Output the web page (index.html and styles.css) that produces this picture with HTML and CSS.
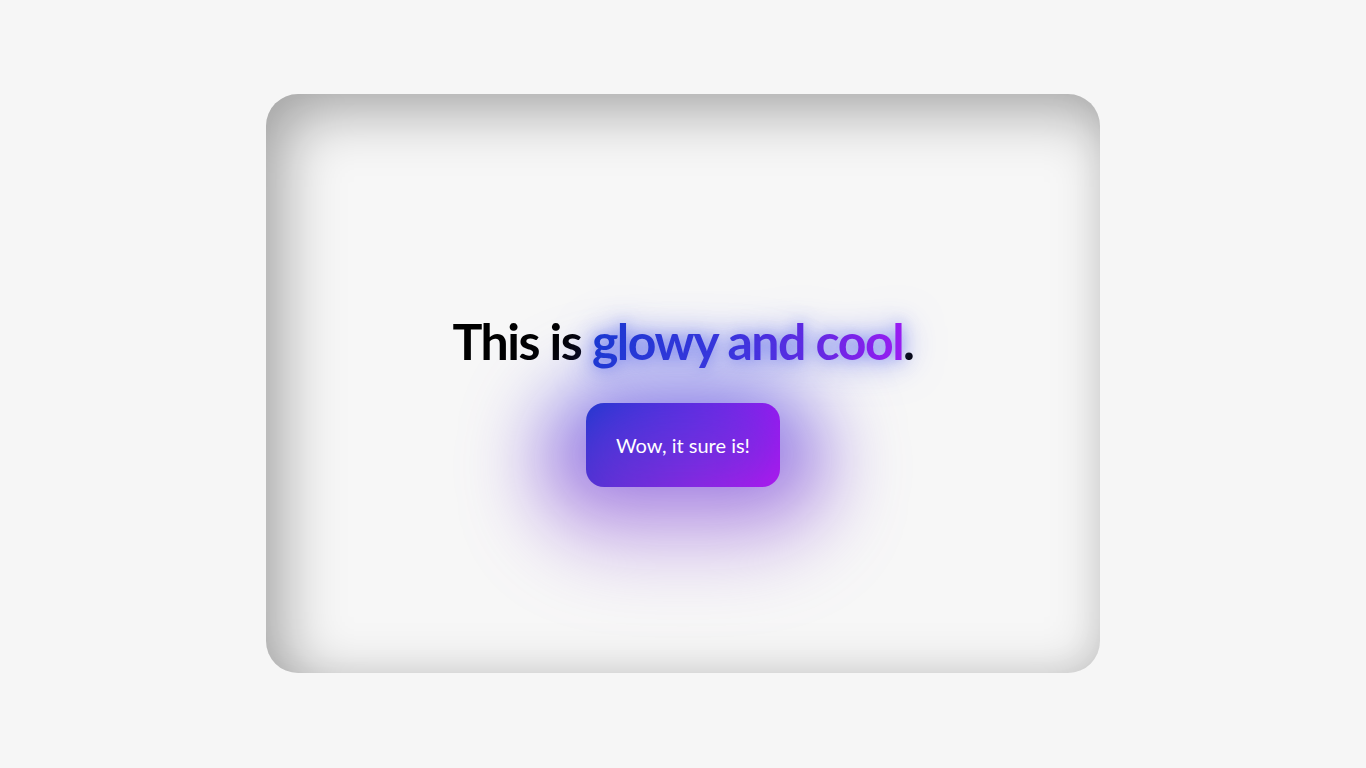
FILE: index.html
```html
<!DOCTYPE html>
<html lang="en">
<head>
<meta charset="utf-8">
<title>Glowy</title>
<link rel="stylesheet" href="styles.css">
</head>
<body>
<main class="stage">
  <section class="card">
    <h1 class="title">This is <span class="glow">glowy and cool</span>.</h1>
    <button class="btn" type="button">Wow, it sure is!</button>
  </section>
</main>
</body>
</html>
```
FILE: styles.css
```css
* { box-sizing: border-box; }
html, body { margin: 0; padding: 0; }
body {
  background: #f6f6f6;
  font-family: Lato, "Open Sans", sans-serif;
  width: 1366px;
  height: 768px;
  overflow: hidden;
}
.stage {
  height: 768px;
  display: flex;
  align-items: center;
  justify-content: center;
  padding-bottom: 1px;
}
.card {
  width: 834px;
  height: 579px;
  border-radius: 32px;
  background: #f7f7f7;
  box-shadow: inset 16px 16px 60px rgba(0,0,0,0.34), inset -6px -6px 30px rgba(0,0,0,0.03);
  display: flex;
  flex-direction: column;
  align-items: center;
  justify-content: center;
  padding-top: 30px;
}
.title {
  margin: 0;
  font-size: 50px;
  font-weight: 700;
  letter-spacing: -1.5px;
  color: #000;
  line-height: 1.2;
}
.glow {
  background: linear-gradient(90deg, #1838d0 0%, #3a34dc 45%, #6a28e4 75%, #9a1cf2 100%);
  -webkit-background-clip: text;
  background-clip: text;
  color: transparent;
  filter: drop-shadow(0 0 8px rgba(60,80,235,0.6)) drop-shadow(0 2px 18px rgba(80,90,235,0.55));
}
.btn {
  position: relative;
  margin-top: 32px;
  width: 194px;
  height: 84px;
  border: 0;
  border-radius: 18px;
  background: linear-gradient(120deg, #0a36c6 0%, #5a24da 35%, #9a14ec 65%, #d000ff 92%, #d800ff 100%);
  color: #fff;
  font-family: Lato, sans-serif;
  font-size: 20px;
  padding: 0;
  isolation: isolate;
}
.btn::before {
  content: "";
  position: absolute;
  left: -44px;
  right: -44px;
  top: -16px;
  bottom: -66px;
  border-radius: 80px;
  background: linear-gradient(180deg, rgba(50,70,235,0.8) 0%, rgba(115,50,210,0.7) 45%, rgba(170,110,220,0.2) 100%);
  filter: blur(40px);
  z-index: -1;
}
```
